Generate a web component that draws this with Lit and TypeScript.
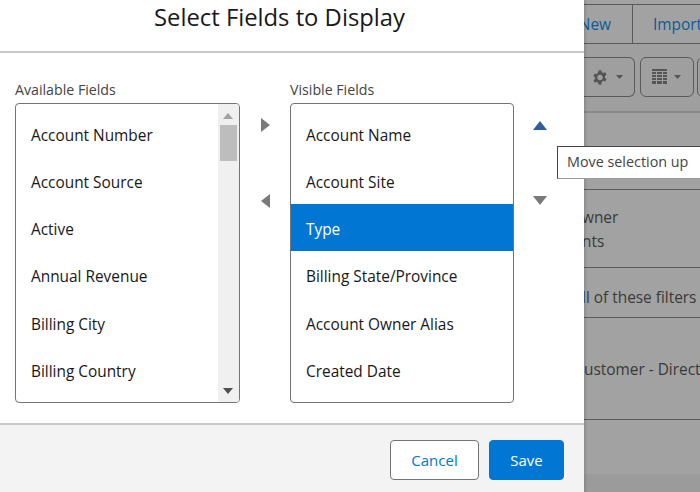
import { LitElement, html, css, svg } from "lit";
import { customElement } from "lit/decorators.js";

const tri = (w: number, h: number, points: string, cls: string) =>
  html`<svg class=${cls} width=${w} height=${h} viewBox="0 0 ${w} ${h}">${svg`<polygon points=${points} fill="currentColor"></polygon>`}</svg>`;

const available = ["Account Number", "Account Source", "Active", "Annual Revenue", "Billing City", "Billing Country"];
const visible = ["Account Name", "Account Site", "Type", "Billing State/Province", "Account Owner Alias", "Created Date"];

@customElement("app-root")
export class AppRoot extends LitElement {
  static styles = css`
    :host {
      display: block;
      width: 700px;
      height: 492px;
      overflow: hidden;
      position: relative;
      font-family: "Open Sans", "Noto Sans", sans-serif;
      color: #181818;
    }
    .page { display: flex; width: 700px; height: 492px; }
    .modal {
      width: 584px;
      flex: none;
      display: flex;
      flex-direction: column;
      background: #fff;
      box-shadow: 1px 0 3px rgba(0,0,0,.2);
      position: relative;
      z-index: 1;
    }
    .header {
      flex: none;
      box-sizing: border-box;
      border-bottom: 2px solid #c9c9c9;
      height: 53px;
      display: flex;
      justify-content: center;
      padding: 0 25px 0 0;
    }
    .header h1 {
      margin: 1px 0 0;
      font-size: 23.8px;
      line-height: 33px;
      font-weight: 400;
    }
    .body {
      flex: 1;
      display: flex;
      padding: 27px 0 0 15px;
    }
    .col { display: flex; flex-direction: column; }
    .label { font-size: 14.2px; line-height: 19px; color: #444; height: 23px; }
    .listbox {
      height: 300px;
      box-sizing: border-box;
      border: 1px solid #747474;
      border-radius: 4px;
      overflow: hidden;
      display: flex;
      background: #fff;
    }
    .w1 { width: 225px; }
    .w2 { width: 224px; }
    .items { flex: 1; padding-top: 5.8px; min-width: 0; }
    .item {
      height: 47.2px;
      box-sizing: border-box;
      padding: 14px 15px 0;
      font-size: 15.4px;
      line-height: 24px;
      white-space: nowrap;
    }
    .item.sel { background: #0176d3; color: #fff; }
    .scroll {
      width: 21px;
      flex: none;
      background: #f0f0f0;
      display: flex;
      flex-direction: column;
      align-items: center;
      padding-top: 9px;
      box-sizing: border-box;
    }
    .scroll .up { color: #a3a3a3; margin-left: -1px; }
    .thumb { width: 17px; height: 36px; background: #bdbdbd; margin-top: 6px; }
    .scroll .down { color: #505050; margin-top: auto; margin-bottom: 8px; margin-left: -1px; }
    .move {
      width: 50px;
      flex: none;
      display: flex;
      flex-direction: column;
      align-items: center;
      padding-top: 38px;
      box-sizing: border-box;
      color: #7a7a7a;
    }
    .move svg { display: block; }
    .move .second { margin-top: 62px; }
    .order {
      width: 52px;
      flex: none;
      display: flex;
      flex-direction: column;
      align-items: center;
      padding-top: 41px;
      box-sizing: border-box;
      color: #7a7a7a;
    }
    .order svg { display: block; }
    .order .upb { color: #2e5e9e; }
    .order .second { margin-top: 66px; }
    .footer {
      height: 69px;
      flex: none;
      box-sizing: border-box;
      border-top: 2px solid #c9c9c9;
      background: #f3f3f3;
      display: flex;
      justify-content: flex-end;
      gap: 10px;
      padding: 15px 20px 0 0;
    }
    button {
      font: inherit;
      font-size: 15px;
      height: 40px;
      border-radius: 4px;
      box-sizing: border-box;
      padding: 0;
    }
    .cancel { width: 89px; background: #fff; border: 1px solid #747474; color: #0176d3; }
    .save { width: 75px; background: #0176d3; border: 1px solid #0176d3; color: #fff; }

    .back {
      flex: 1;
      min-width: 0;
      background: #a2a2a2;
      display: flex;
      flex-direction: column;
      overflow: hidden;
      color: #3a3a3a;
      font-size: 15.4px;
      white-space: nowrap;
    }
    .tabs {
      margin-top: 4px;
      height: 40px;
      box-sizing: border-box;
      border-top: 1px solid #5a5a5a;
      border-bottom: 1px solid #5a5a5a;
      display: flex;
      flex: none;
      color: #0e5a99;
      line-height: 40px;
    }
    .tab-new { width: 49px; flex: none; border-right: 1px solid #5a5a5a; display: flex; justify-content: flex-end; padding-right: 21px; box-sizing: border-box; }
    .tab-imp { padding-left: 20px; }
    .tools {
      height: 69px;
      flex: none;
      display: flex;
      padding-top: 13px;
      box-sizing: border-box;
      background: #9f9f9f;
      border-bottom: 2px solid #8a8a8a;
    }
    .tool {
      height: 40px;
      box-sizing: border-box;
      border: 1px solid #5a5a5a;
      border-radius: 6px;
      display: flex;
      align-items: center;
      flex: none;
      color: #555;
    }
    .t1 { width: 51px; border-left: 0; border-top-left-radius: 0; border-bottom-left-radius: 0; padding-left: 8px; gap: 8px; }
    .t2 { width: 54px; margin-left: 5px; padding-left: 11px; gap: 7px; }
    .t3 { width: 20px; margin-left: 3px; }
    .row { flex: none; box-sizing: border-box; border-bottom: 1px solid #5a5a5a; }
    .r0 { height: 77px; }
    .r2 { height: 78px; padding-top: 16px; line-height: 24px; }
    .r2 .owner { margin-left: -14px; }
    .r2 .nts { margin-left: -2px; }
    .r3 { height: 50px; line-height: 24px; padding-top: 18px; }
    .r3 span { margin-left: -2px; display: block; }
    .r4 { height: 102px; line-height: 24px; padding-top: 40px; }
    .rest { height: 54px; flex: none; }
    .bottom { flex: 1; background: #9b9b9b; }

    .tooltip {
      position: absolute;
      left: 557px;
      top: 146px;
      width: 143px;
      height: 33px;
      box-sizing: border-box;
      background: #fff;
      border-top: 1px solid #444;
      border-left: 1px solid #444;
      border-bottom: 1px solid #9a9a9a;
      padding-left: 9px;
      font-size: 14.35px;
      line-height: 29px;
      color: #444;
      white-space: nowrap;
      z-index: 2;
    }
  `;

  render() {
    return html`
      <div class="page">
        <section class="modal">
          <header class="header"><h1>Select Fields to Display</h1></header>
          <div class="body">
            <div class="col">
              <div class="label">Available Fields</div>
              <div class="listbox w1">
                <div class="items">${available.map((t) => html`<div class="item">${t}</div>`)}</div>
                <div class="scroll">
                  ${tri(10, 6, "5,0 10,6 0,6", "up")}
                  <div class="thumb"></div>
                  ${tri(10, 6, "0,0 10,0 5,6", "down")}
                </div>
              </div>
            </div>
            <div class="move">
              ${tri(9, 14, "0,0 9,7 0,14", "")}
              ${tri(9, 14, "9,0 0,7 9,14", "second")}
            </div>
            <div class="col">
              <div class="label">Visible Fields</div>
              <div class="listbox w2">
                <div class="items">
                  ${visible.map((t, i) => html`<div class="item ${i === 2 ? "sel" : ""}">${t}</div>`)}
                </div>
              </div>
            </div>
            <div class="order">
              ${tri(14, 9, "7,0 14,9 0,9", "upb")}
              ${tri(14, 9, "0,0 14,0 7,9", "second")}
            </div>
          </div>
          <footer class="footer">
            <button class="cancel">Cancel</button>
            <button class="save">Save</button>
          </footer>
        </section>
        <aside class="back">
          <div class="tabs">
            <div class="tab-new">New</div>
            <div class="tab-imp">Import</div>
          </div>
          <div class="tools">
            <div class="tool t1">
              <svg width="16" height="17" viewBox="0 0 24 24"><path fill="currentColor" fill-rule="evenodd" d="M10 1h4l.6 3a8 8 0 0 1 2.300 1.300l2.900-1 2 3.500-2.300 2a8 8 0 0 1 0 2.600l2.300 2-2 3.500-2.900-1a8 8 0 0 1-2.300 1.300L14 23h-4l-.6-3a8 8 0 0 1-2.300-1.300l-2.900 1-2-3.500 2.300-2a8 8 0 0 1 0-2.600l-2.300-2 2-3.500 2.900 1A8 8 0 0 1 9.400 4zM12 8a4 4 0 1 0 0 8 4 4 0 0 0 0-8z"/></svg>
              ${tri(7, 4, "0,0 7,0 3.5,4", "")}
            </div>
            <div class="tool t2">
              <svg width="15" height="16" viewBox="0 0 15 16"><path fill="currentColor" d="M0 0h15v2H0zM0 3h4v2H0zM5 3h5v2H5zM11 3h4v2h-4zM0 6h4v2H0zM5 6h5v2H5zM11 6h4v2h-4zM0 9h4v2H0zM5 9h5v2H5zM11 9h4v2h-4zM0 12h4v3H0zM5 12h5v3H5zM11 12h4v3h-4z"/></svg>
              ${tri(7, 4, "0,0 7,0 3.5,4", "")}
            </div>
            <div class="tool t3"></div>
          </div>
          <div class="row r0"></div>
          <div class="row r2">
            <div class="owner">Owner</div>
            <div class="nts">nts</div>
          </div>
          <div class="row r3"><span>ll of these filters</span></div>
          <div class="row r4">ustomer - Direct</div>
          <div class="rest"></div>
          <div class="bottom"></div>
        </aside>
      </div>
      <div class="tooltip">Move selection up</div>
    `;
  }
}
